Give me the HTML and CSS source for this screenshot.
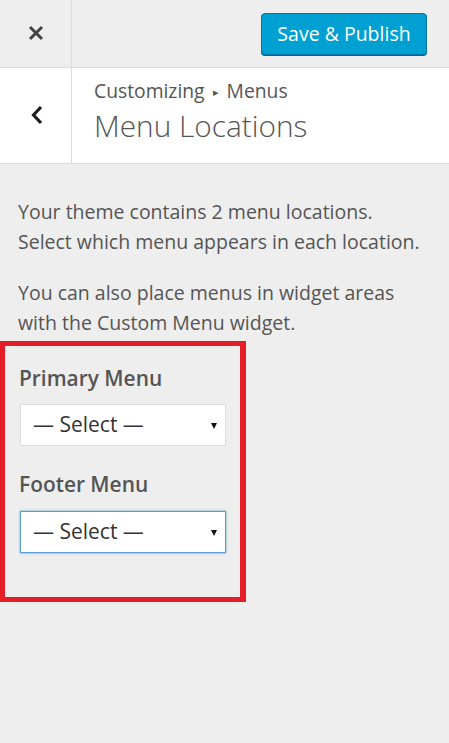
FILE: index.html
```html
<!DOCTYPE html>
<html lang="en">
<head>
<meta charset="utf-8">
<title>Menu Locations</title>
<link rel="stylesheet" href="styles.css">
</head>
<body>
<div class="panel">
  <header class="topbar">
    <button class="close" aria-label="Close">
      <svg width="16" height="16" viewBox="0 0 16 16"><path d="M2 2 L14 14 M14 2 L2 14" stroke="#444" stroke-width="3" fill="none"/></svg>
    </button>
    <div class="topbar-actions">
      <button class="publish">Save &amp; Publish</button>
    </div>
  </header>
  <div class="section-head">
    <button class="back" aria-label="Back">
      <svg width="14" height="20" viewBox="0 0 14 20"><path d="M11 2 L3.5 10 L11 18" stroke="#1e1e1e" stroke-width="3.2" fill="none"/></svg>
    </button>
    <div class="titles">
      <div class="crumb">Customizing <span class="sep">▸</span> Menus</div>
      <h1 class="title">Menu Locations</h1>
    </div>
  </div>
  <div class="content">
    <p class="desc">Your theme contains 2 menu locations. Select which menu appears in each location.</p>
    <p class="desc second">You can also place menus in widget areas with the Custom Menu widget.</p>
    <div class="field">
      <label class="field-label">Primary Menu</label>
      <div class="select">— Select —<span class="arrow"></span></div>
    </div>
    <div class="field">
      <label class="field-label">Footer Menu</label>
      <div class="select focused">— Select —<span class="arrow"></span></div>
    </div>
    <div class="highlight"></div>
  </div>
</div>
</body>
</html>
```
FILE: styles.css
```css
* { box-sizing: border-box; }
html, body { margin: 0; padding: 0; }
body {
  background: #eeeeee;
  font-family: "Open Sans", "Noto Sans", sans-serif;
  color: #555;
  width: 449px;
  height: 743px;
  overflow: hidden;
}
.panel { position: relative; }
.topbar {
  display: flex;
  align-items: center;
  height: 68px;
  border-bottom: 1px solid #dcdcdc;
  background: #eeeeee;
}
.close {
  width: 72px;
  height: 67px;
  border: 0;
  border-right: 1px solid #dcdcdc;
  background: transparent;
  display: flex;
  align-items: center;
  justify-content: center;
  padding: 0 0 1px 0;
}
.topbar-actions {
  flex: 1;
  display: flex;
  justify-content: flex-end;
  padding-right: 22px;
}
.publish {
  width: 166px;
  height: 42px;
  margin-top: 1px;
  background: #00a0d2;
  border: 1px solid #0073aa;
  border-radius: 4px;
  box-shadow: 0 1px 0 #006799;
  color: #fff;
  font-family: "Open Sans", "Noto Sans", sans-serif;
  font-size: 19.5px;
  padding: 0 0 2px 0;
}
.section-head {
  display: flex;
  height: 96px;
  background: #fff;
  border-bottom: 1px solid #dcdcdc;
}
.back {
  width: 72px;
  border: 0;
  border-right: 1px solid #dcdcdc;
  background: transparent;
  display: flex;
  align-items: center;
  justify-content: center;
  padding: 0 0 2px 3px;
}
.titles {
  padding: 10px 0 0 22px;
}
.crumb {
  font-size: 19.3px;
  line-height: 26px;
  color: #555;
}
.sep {
  font-size: 11px;
  position: relative;
  top: -2px;
  margin: 0 3px;
}
.title {
  margin: 0;
  font-size: 29.8px;
  font-weight: 300;
  line-height: 38px;
  color: #555;
}
.content {
  position: relative;
  padding: 33px 25px 0 18px;
}
.desc {
  margin: 0;
  font-size: 19.5px;
  line-height: 29.5px;
  color: #555;
}
.desc.second { margin-top: 22px; }
.field { padding-left: 2px; }
.field-label {
  display: block;
  margin-top: 27px;
  margin-left: -1px;
  font-size: 20.9px;
  font-weight: 600;
  line-height: 28px;
  color: #555;
}
.field + .field .field-label { margin-top: 24px; }
.select {
  position: relative;
  margin-top: 12px;
  width: 206px;
  height: 42px;
  background: #fff;
  border: 1px solid #dddddd;
  font-size: 21px;
  line-height: 38px;
  padding-left: 12px;
  color: #333;
}
.select.focused {
  border-color: #5b9dd9;
  box-shadow: 0 0 2px rgba(30, 140, 190, 0.8);
  margin-top: 13px;
}
.arrow {
  position: absolute;
  right: 8px;
  top: 18px;
  width: 0;
  height: 0;
  border-left: 3.5px solid transparent;
  border-right: 3.5px solid transparent;
  border-top: 6px solid #111;
}
.highlight {
  position: absolute;
  left: 0;
  top: 177px;
  width: 246px;
  height: 261px;
  border: 5px solid #e41e26;
  border-right-width: 6px;
  border-bottom-width: 5px;
  pointer-events: none;
}
```
